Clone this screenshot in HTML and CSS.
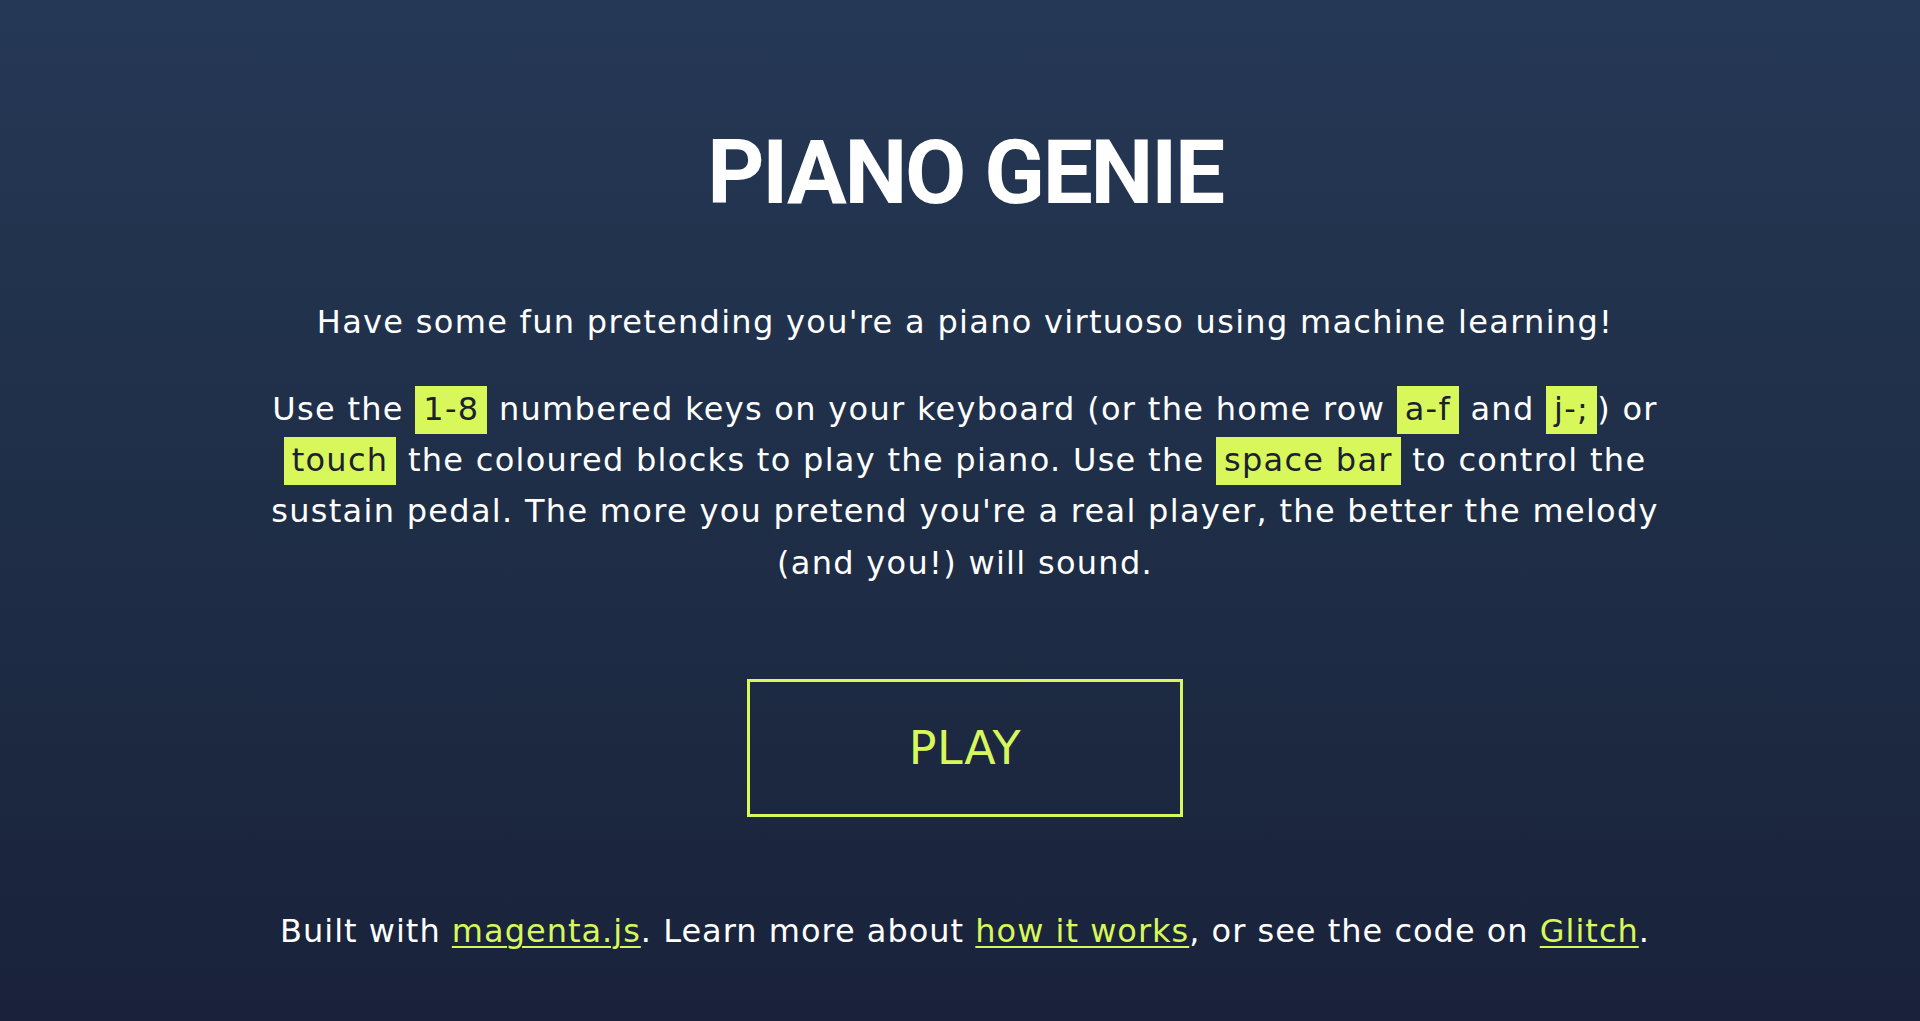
FILE: index.html
```html
<!DOCTYPE html>
<html lang="en">
<head>
    <meta charset="UTF-8">
    <meta name="viewport" content="width=device-width, initial-scale=1.0">
    <title>Piano Genie</title>
    <link rel="stylesheet" href="styles.css">
</head>
<body>
    <main class="page">
        <h1 class="title">PIANO GENIE</h1>

        <p class="intro">Have some fun pretending you're a piano virtuoso using machine learning!</p>

        <p class="instructions">Use the <span class="key">1-8</span> numbered keys on your keyboard (or the home row <span class="key">a-f</span> and <span class="key">j-;</span>) or <span class="key">touch</span> the coloured blocks to play the piano. Use the <span class="key">space bar</span> to control the sustain pedal. The more you pretend you're a real player, the better the melody (and you!) will sound.</p>

        <button type="button" class="play-btn">PLAY</button>

        <p class="footer">Built with <a href="#">magenta.js</a>. Learn more about <a href="#">how it works</a>, or see the code on <a href="#">Glitch</a>.</p>
    </main>
</body>
</html>
```

FILE: styles.css
```css
/* General Styles */
html {
    background-color: #19223a;
}

body {
    margin: 0;
    min-height: 100vh;
    background: linear-gradient(180deg, #253855 0%, #1f2e47 50%, #19223a 100%);
    color: #fff;
    font-family: "DejaVu Sans", sans-serif;
}

.page {
    display: flex;
    flex-direction: column;
    align-items: center;
    padding: 120px 0 0 10px;
    text-align: center;
}

.title {
    margin: 0;
    font-family: Roboto, sans-serif;
    font-weight: 700;
    font-size: 89px;
    line-height: 1.2;
    letter-spacing: -2.2px;
}

.intro,
.instructions,
.footer {
    font-size: 32px;
    line-height: 1.6;
    letter-spacing: 1.3px;
}

.intro {
    margin: 70px 0 0;
}

.instructions {
    margin: 36px 0 0;
    max-width: 1440px;
}

/* highlighted keys */
.key {
    background-color: #d7f75a;
    color: #1b2130;
    padding: 4px 8px 6px;
}

.play-btn {
    margin-top: 90px;
    width: 436px;
    height: 138px;
    border: 3px solid #d7f75a;
    background: transparent;
    color: #d7f75a;
    font-family: "DejaVu Sans", sans-serif;
    font-size: 46px;
    letter-spacing: 0.5px;
    cursor: pointer;
}

.play-btn:hover {
    background-color: rgba(215, 247, 90, 0.08);
}

.footer {
    margin: 89px 0 0;
    letter-spacing: 1px;
}

.footer a {
    color: #d7f75a;
    text-decoration: underline;
    text-decoration-thickness: 2px;
    text-underline-offset: 4px;
}
```
